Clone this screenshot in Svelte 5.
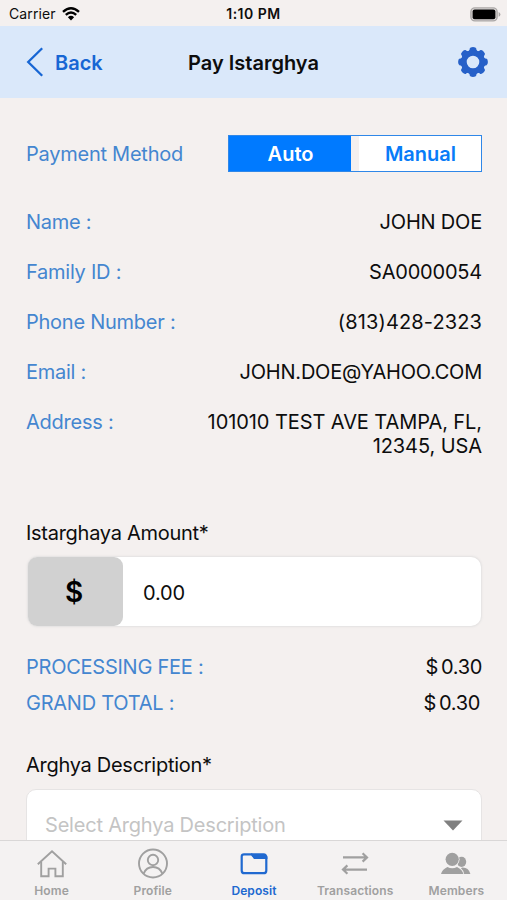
<script lang="ts">
  type Tab = 'home' | 'profile' | 'deposit' | 'transactions' | 'members';

  const tabs: { id: Tab; label: string }[] = [
    { id: 'home', label: 'Home' },
    { id: 'profile', label: 'Profile' },
    { id: 'deposit', label: 'Deposit' },
    { id: 'transactions', label: 'Transactions' },
    { id: 'members', label: 'Members' }
  ];

  const details = [
    { id: 'name', label: 'Name :', value: 'JOHN DOE' },
    { id: 'family', label: 'Family ID :', value: 'SA0000054' },
    { id: 'phone', label: 'Phone Number :', value: '(813)428-2323' },
    { id: 'email', label: 'Email :', value: 'JOHN.DOE@YAHOO.COM' },
    { id: 'address', label: 'Address :', value: '101010 TEST AVE TAMPA, FL, 12345, USA' }
  ];

  let method = $state<'auto' | 'manual'>('auto');
  let activeTab = $state<Tab>('deposit');
  let amount = $state('0.00');
</script>

<div class="screen">
  <div class="status">
    <div class="carrier">
      <span>Carrier</span>
      <svg width="18" height="14" viewBox="0 0 18 14">
        <path d="M1 4.8 Q9 -2.2 17 4.8" />
        <path d="M3.8 7.8 Q9 3.2 14.2 7.8" />
        <path class="dot" d="M5.9 10.2 Q9 7.3 12.1 10.2 L9 13.4 Z" />
      </svg>
    </div>
    <span class="time">1:10 PM</span>
    <div class="battery">
      <svg width="31" height="15" viewBox="0 0 31 15">
        <rect x="0.9" y="0.9" width="26.2" height="13" rx="4" fill="#ddd9d8" stroke="#aaa7a6" stroke-width="1.4" />
        <rect x="2.6" y="2.6" width="22.8" height="9.6" rx="2" fill="#000" />
        <path d="M28.6 5 Q30.4 5.8 30.4 7.4 Q30.4 9 28.6 9.8 Z" fill="#aaa7a6" />
      </svg>
    </div>
  </div>

  <header>
    <button class="back">
      <svg width="18" height="32" viewBox="0 0 18 32">
        <path d="M16.2 2.2 L2.2 16 L16.2 29.8" />
      </svg>
      <span>Back</span>
    </button>
    <h1>Pay Istarghya</h1>
    <button class="settings" aria-label="Settings">
      <svg width="30" height="30" viewBox="-15 -15 30 30">
        <g fill="#2660c8">
          {#each [0, 45, 90, 135, 180, 225, 270, 315] as angle}
            <path transform="rotate({angle})" d="M-5 -10 L-3.4 -12.2 V-13.2 Q-3 -14.9 0 -14.9 Q3 -14.9 3.4 -13.2 V-12.2 L5 -10 Z" />
          {/each}
        </g>
        <circle r="9.2" fill="none" stroke="#2660c8" stroke-width="5.8" />
      </svg>
    </button>
  </header>

  <main>
    <div class="method">
      <span class="label">Payment Method</span>
      <div class="segment">
        <button class:on={method === 'auto'} onclick={() => (method = 'auto')}>Auto</button>
        <button class:on={method === 'manual'} onclick={() => (method = 'manual')}>Manual</button>
      </div>
    </div>

    <dl>
      {#each details as item}
        <div class="detail">
          <dt class="label">{item.label}</dt>
          <dd class={item.id}>{item.value}</dd>
        </div>
      {/each}
    </dl>

    <label class="field" for="amount">Istarghaya Amount*</label>
    <div class="amount">
      <span class="currency">$</span>
      <input id="amount" bind:value={amount} />
    </div>

    <div class="total">
      <span class="label">PROCESSING FEE :</span>
      <span class="sum"><span>$</span><span>0.30</span></span>
    </div>
    <div class="total grand">
      <span class="label">GRAND TOTAL :</span>
      <span class="sum"><span>$</span><span>0.30</span></span>
    </div>

    <div class="field description">Arghya Description*</div>
    <button class="select">
      <span>Select Arghya Description</span>
      <svg width="20" height="11" viewBox="0 0 20 11"><path d="M0.5 0.5 H19.5 L10 10.5 Z" fill="#808080" /></svg>
    </button>
  </main>

  <nav>
    {#each tabs as tab}
      <button class="tab {tab.id}" class:active={activeTab === tab.id} onclick={() => (activeTab = tab.id)}>
        <svg width="32" height="32" viewBox="0 0 32 32">
          {#if tab.id === 'home'}
            <path d="M1.8 16.2 L16 3.2 L30.2 16.2" />
            <path d="M5.2 13.8 V28.2 H12.6 V20.6 H19.4 V28.2 H26.8 V13.8" />
          {:else if tab.id === 'profile'}
            <circle cx="16" cy="15.5" r="14" />
            <circle cx="16" cy="12" r="5.2" />
            <path d="M6.6 25.6 C8.5 20.8 12 19 16 19 S23.5 20.8 25.4 25.6" />
          {:else if tab.id === 'deposit'}
            <path d="M6 6.3 H13.5 L16.3 9.4 H28.3 V22.4 Q28.3 25.2 25.5 25.2 H6.5 Q3.7 25.2 3.7 22.4 V8.6 Q3.7 6.3 6 6.3 Z" />
            <path class="flap" d="M13 5.2 H25.5 Q29.4 5.4 29.4 9.4 V11 H16 Z" />
          {:else if tab.id === 'transactions'}
            <path d="M4 9.4 H27.6 M23.6 5.2 L28 9.4 L23.6 13.6" />
            <path d="M28 21.6 H4.4 M8.4 17.4 L4 21.6 L8.4 25.8" />
          {:else}
            <g class="solid">
              <ellipse cx="21.6" cy="13.8" rx="4.6" ry="5.1" />
              <path d="M20 26 Q19.5 20 22.4 19.6 Q28.5 19.4 30.4 26 Z" />
              <circle class="cut" cx="12.2" cy="11.3" r="7.4" />
              <path class="cut" d="M0.5 27 Q1.5 18 12.5 18 T24.4 27 Z" />
              <circle cx="12.2" cy="11.3" r="6.6" />
              <path d="M1 26 Q2 21.5 7.4 18.9 Q12.2 21.4 17 18.9 Q22.4 21.5 23.4 26 Z" />
            </g>
          {/if}
        </svg>
        <span>{tab.label}</span>
      </button>
    {/each}
  </nav>
</div>

<style>
  :global(body) {
    margin: 0;
    background: #f4f0ef;
  }

  .screen {
    display: flex;
    flex-direction: column;
    width: 507px;
    height: 900px;
    overflow: hidden;
    background: #f4f0ef;
    color: #0d0d0d;
    font-family: Inter, 'Liberation Sans', sans-serif;
    font-size: 20px;
    line-height: 24px;
  }

  button {
    padding: 0;
    border: 0;
    background: none;
    font: inherit;
    color: inherit;
  }

  svg {
    display: block;
    flex: none;
  }

  /* Status bar */
  .status {
    display: grid;
    grid-template-columns: 1fr auto 1fr;
    align-items: center;
    flex: none;
    height: 26px;
    padding: 1px 6px 0 9px;
    box-sizing: border-box;
    font-size: 14px;
    line-height: 26px;
  }

  .carrier {
    display: flex;
    align-items: center;
    gap: 6px;
    letter-spacing: 0.1px;
  }

  .carrier svg {
    fill: none;
    stroke: #000;
    stroke-width: 2.4;
  }

  .carrier .dot {
    fill: #000;
    stroke: none;
  }

  .time {
    margin-right: 3px;
    font-weight: 600;
    letter-spacing: 0.5px;
  }

  .battery {
    display: flex;
    justify-content: flex-end;
  }

  /* Header */
  header {
    display: grid;
    grid-template-columns: 1fr auto 1fr;
    align-items: center;
    flex: none;
    height: 72px;
    padding: 0 19px;
    background: #dae8fa;
  }

  .back {
    display: flex;
    align-items: center;
    gap: 11px;
    margin-left: 7px;
    color: #1766d4;
    font-weight: 600;
  }

  .back svg {
    fill: none;
    stroke: #1766d4;
    stroke-width: 2.3;
  }

  .back span,
  h1 {
    padding-top: 1px;
  }

  h1 {
    margin: 0;
    font-size: 20px;
    font-weight: 600;
  }

  .settings {
    justify-self: end;
  }

  /* Form */
  main {
    flex: 1;
    min-height: 0;
    padding: 37px 25px 0 26px;
    overflow: hidden;
  }

  .label {
    color: #4486d0;
    letter-spacing: -0.25px;
  }

  .method {
    display: flex;
    justify-content: space-between;
    align-items: center;
    height: 37px;
  }

  .segment {
    display: flex;
    justify-content: space-between;
    width: 254px;
    height: 37px;
    box-sizing: border-box;
    border: 1px solid #2f87e8;
  }

  .segment button {
    width: 122px;
    padding-left: 1px;
    background: #fff;
    color: #087cf8;
    font-weight: 600;
  }

  .segment .on {
    background: #007aff;
    color: #fff;
  }

  dl {
    display: flex;
    flex-direction: column;
    gap: 26px;
    margin: 38px 0 0;
  }

  .detail {
    display: flex;
    justify-content: space-between;
  }

  dd {
    max-width: 285px;
    margin: 0;
    text-align: right;
    letter-spacing: -0.2px;
  }

  dd.address {
    letter-spacing: -0.08px;
  }

  dd.phone {
    letter-spacing: 0.12px;
  }

  .field {
    display: block;
    margin-top: 63px;
    letter-spacing: -0.28px;
  }

  .amount {
    display: flex;
    height: 69px;
    margin: 12px 1px 0 2px;
    border-radius: 10px;
    background: #fff;
    box-shadow: 0 0 2px 1px #e3e1e1;
  }

  .currency {
    display: flex;
    align-items: center;
    justify-content: center;
    flex: none;
    width: 95px;
    border-radius: 9px;
    padding-right: 3px;
    box-sizing: border-box;
    background: #d1d1d1;
    color: #000;
    font-size: 28px;
    font-weight: 600;
  }

  input {
    min-width: 0;
    flex: 1;
    padding: 2px 20px 0;
    border: 0;
    background: none;
    color: inherit;
    font: inherit;
    letter-spacing: -0.2px;
    outline: none;
  }

  .total {
    display: flex;
    justify-content: space-between;
    margin-top: 29px;
  }

  .total.grand {
    margin-top: 12px;
    padding-right: 2px;
  }

  .sum {
    display: flex;
    gap: 3px;
    letter-spacing: -0.35px;
  }

  .description {
    margin-top: 38px;
  }

  .select {
    display: flex;
    justify-content: space-between;
    align-items: center;
    width: 456px;
    height: 72px;
    margin-top: 12px;
    padding: 0 18px;
    border: 1px solid #e6e4e4;
    border-radius: 10px;
    background: #fff;
    color: #c4c4c4;
    letter-spacing: -0.2px;
  }

  /* Tab bar */
  nav {
    display: grid;
    grid-template-columns: repeat(5, 1fr);
    flex: none;
    height: 60px;
    padding-left: 1px;
    border-top: 1px solid #d9d7d7;
    box-sizing: border-box;
    background: #f4f2f2;
  }

  .tab {
    display: flex;
    flex-direction: column;
    align-items: center;
    padding-top: 7px;
    color: #a0a0a0;
    font-size: 12px;
    font-weight: 600;
    line-height: 22px;
    letter-spacing: 0.1px;
  }

  .tab svg {
    fill: none;
    stroke: currentColor;
    stroke-width: 1.9;
  }

  .tab.deposit svg,
  .tab.transactions svg {
    stroke-width: 2.2;
  }

  .tab .solid,
  .tab .flap {
    fill: currentColor;
    stroke: none;
  }

  .tab .cut {
    fill: #f4f2f2;
  }

  .tab.active {
    color: #2069d0;
  }
</style>
